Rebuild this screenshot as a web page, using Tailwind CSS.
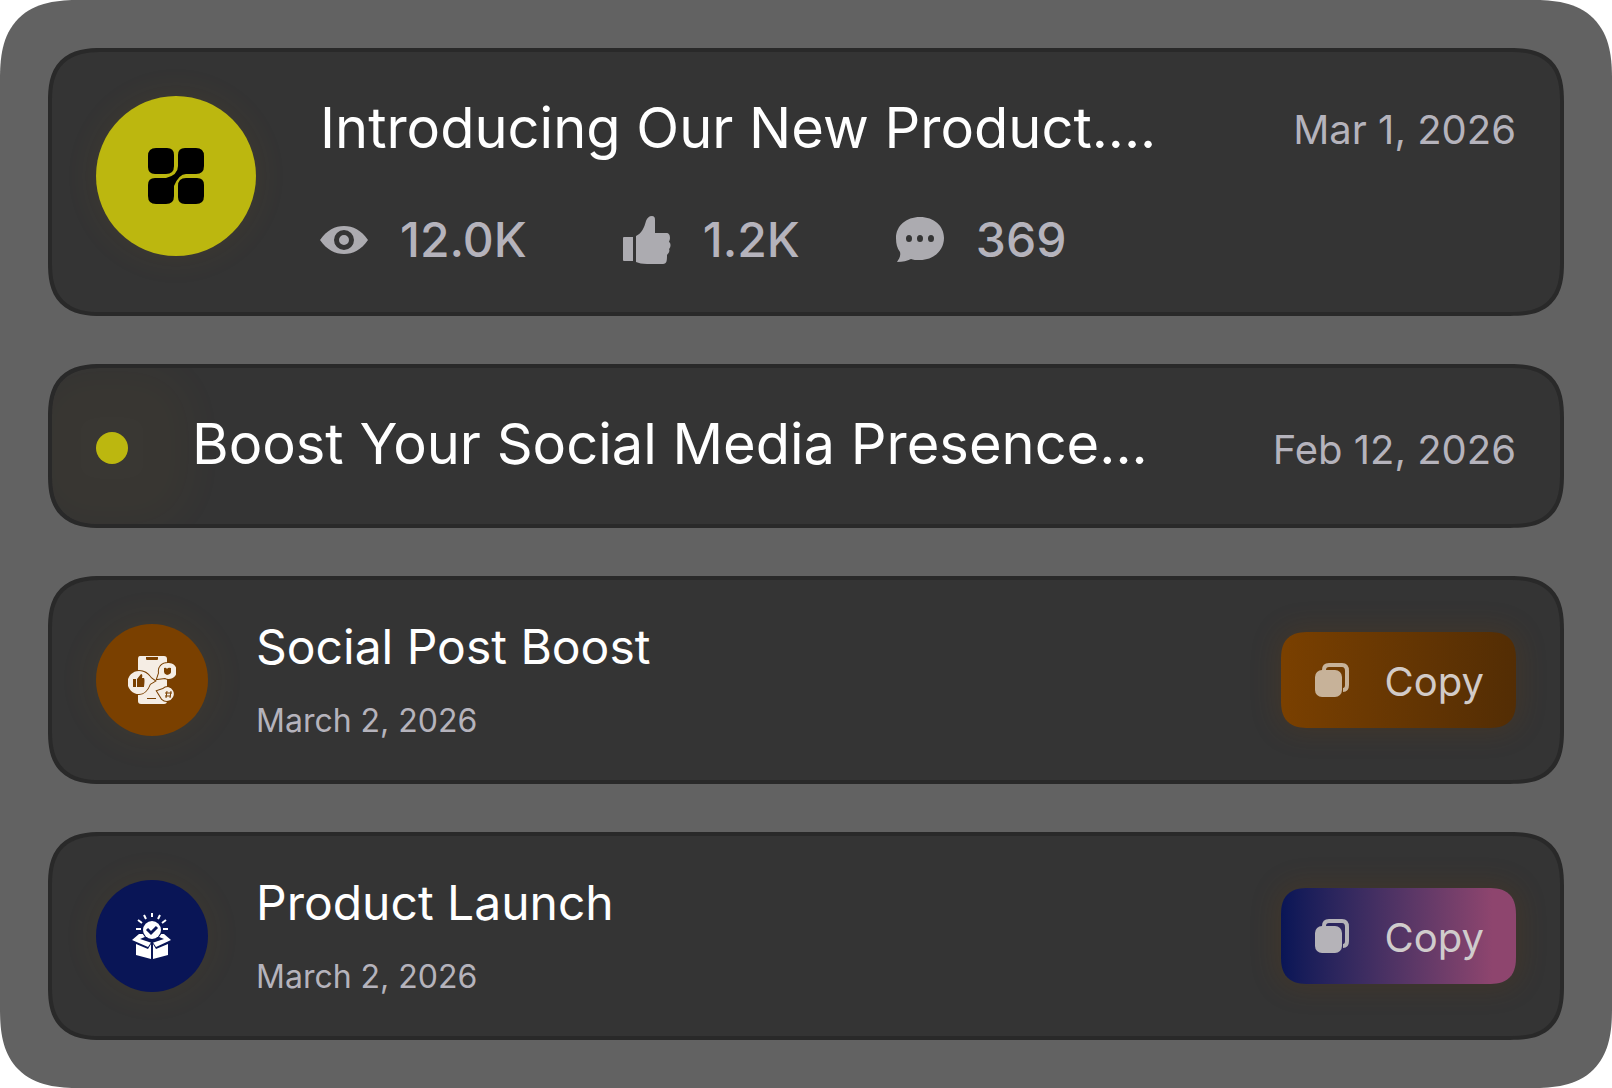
<!DOCTYPE html>
<html lang="en">
<head>
    <meta charset="UTF-8">
    <meta name="viewport" content="width=device-width, initial-scale=1.0">
    <title>Recent Posts</title>
    <script src="https://cdn.jsdelivr.net/npm/@tailwindcss/browser@4"></script>
</head>
<body class="bg-white font-['Inter',sans-serif] text-white">
    <main class="flex min-h-screen flex-col gap-12 rounded-[60px] bg-[#626262] p-12 supports-[corner-shape:squircle]:rounded-[80px] supports-[corner-shape:squircle]:[corner-shape:superellipse(1.4)]">

        <!-- Post with stats -->
        <article class="flex gap-16 overflow-hidden rounded-[40px] border-4 border-[#292929] bg-[#343434] p-11 supports-[corner-shape:squircle]:rounded-[54px] supports-[corner-shape:squircle]:[corner-shape:superellipse(1.4)]">
            <div class="flex size-40 shrink-0 items-center justify-center rounded-full bg-[#bcb70f] shadow-[0_0_32px_4px_#bc860f10]">
                <svg class="size-14" viewBox="0 0 56 56" fill="#000" aria-hidden="true">
                    <path d="M8 0h11q7 0 7 7v11q0 8-8 8H7q-7 0-7-7V8q0-8 8-8Z"/>
                    <path d="M37 0h11q8 0 8 8v10q0 8-8 8H38q-7 0-12 12v10q0 8-8 8H8q-8 0-8-8V37q0-7 7-7h11q12-3 12-12V7q0-7 7-7Z"/>
                    <path d="M38 30h11q7 0 7 7v11q0 8-8 8H37q-7 0-7-7V38q0-8 8-8Z"/>
                </svg>
            </div>
            <div class="flex flex-1 flex-col gap-12">
                <div class="flex items-start justify-between gap-8">
                    <h2 class="text-[56px] leading-[64px] whitespace-nowrap">Introducing Our New Product....</h2>
                    <time datetime="2026-03-01" class="shrink-0 text-[40px] leading-[68px] text-[#b5b3bc]">Mar 1, 2026</time>
                </div>
                <div class="flex gap-24 text-[48px] leading-[56px] font-medium text-[#b5b3bc]">
                    <span class="flex items-center gap-8">
                        <svg class="size-12" viewBox="0 0 48 48" fill="#acabb0" aria-hidden="true">
                            <path fill-rule="evenodd" d="M0 24C7 14 15 10 24 10s17 4 24 14C41 34 33 38 24 38S7 34 0 24Zm24-10a10 10 0 1 0 0 20 10 10 0 0 0 0-20Zm0 5a5 5 0 1 1 0 10 5 5 0 0 1 0-10Z"/>
                        </svg>
                        12.0K
                    </span>
                    <span class="flex items-center gap-8">
                        <svg class="size-12" viewBox="0 0 48 48" fill="#acabb0" aria-hidden="true">
                            <path d="M1 21h9v24H1q-1 0-1-1V22q0-1 1-1Z"/>
                            <path d="M13 20c6-3 8-8 10-15 1-3 3-5 6-5 2 0 3 1 3 4v13h11c3 0 4 2 4 5 0 2-1 3-1 4 2 1 2 5 0 7 1 2 0 4-2 6 0 5 0 9-4 9H24c-5 0-8-1-11-2Z"/>
                        </svg>
                        1.2K
                    </span>
                    <span class="flex items-center gap-8">
                        <svg class="size-12" viewBox="0 0 48 48" fill="#acabb0" aria-hidden="true">
                            <path fill-rule="evenodd" d="M24 1c14 0 24 9 24 21S38 44 24 44c-4 0-7 0-9-1-4 2-8 3-14 3 2-3 4-6 3-10C1 32 0 28 0 22 0 10 10 1 24 1ZM13 19a3 3.500 0 1 0 0 7 3 3.500 0 0 0 0-7Zm11 0a3 3.500 0 1 0 0 7 3 3.500 0 0 0 0-7Zm11 0a3 3.500 0 1 0 0 7 3 3.500 0 0 0 0-7Z"/>
                        </svg>
                        369
                    </span>
                </div>
            </div>
        </article>

        <!-- Compact post -->
        <article class="flex h-[164px] gap-16 overflow-hidden rounded-[40px] border-4 border-[#292929] bg-[#343434] p-11 supports-[corner-shape:squircle]:rounded-[54px] supports-[corner-shape:squircle]:[corner-shape:superellipse(1.4)]">
            <div class="flex h-16 shrink-0 items-center self-end">
                <span class="size-8 rounded-full bg-[#bcb70f] shadow-[0_0_40px_64px_#bc860f09]"></span>
            </div>
            <h2 class="flex-1 text-[56px] leading-[64px] whitespace-nowrap">Boost Your Social Media Presence...</h2>
            <time datetime="2026-02-12" class="shrink-0 self-end text-[40px] leading-[60px] text-[#b5b3bc]">Feb 12, 2026</time>
        </article>

        <!-- Templates -->
        <article class="flex items-center gap-12 overflow-hidden rounded-[40px] border-4 border-[#292929] bg-[#343434] p-11 supports-[corner-shape:squircle]:rounded-[54px] supports-[corner-shape:squircle]:[corner-shape:superellipse(1.4)]">
            <div class="flex size-28 shrink-0 items-center justify-center rounded-full bg-[#7a4000] shadow-[0_0_32px_12px_#bc860f0c]">
                <svg class="size-12" viewBox="0 0 48 48" fill="#f5ede4" aria-hidden="true">
                    <path d="M12 0h24q3 0 3 3v42q0 3-3 3H13q-3 0-3-3V3q0-3 2-3Z"/>
                    <path d="M18 1h12v2q0 1-1 1H19q-1 0-1-1Z" fill="#7a4000"/>
                    <path d="M19 42h9v1h-9Z" fill="#7a4000"/>
                    <g stroke="#7a4000" stroke-width="2" paint-order="stroke">
                        <path d="M11 15c6 0 10 4 12 7l4 3-5 3c-2 5-5 10-11 10A11 11 0 0 1 11 15Z"/>
                        <path d="M40 7a8 8 0 1 1-3 15l-8 1 2-6c-1-6 3-10 9-10Z"/>
                        <path d="M40 31a7 7 0 1 1-6 12l-5-8 6-2q2-2 5-2Z"/>
                    </g>
                    <path d="M5 23h3v8H5Zm4 0 4-5q2 0 1 4h2q1 1 0 9H9Z" fill="#7a4000"/>
                    <path d="M36 12q2-1 3 1 1-2 4-1v4q0 2-4 3-3-1-3-3Z" fill="#7a4000"/>
                    <path d="m39 35-1 7m5-7-1 7m-5-5h7m-7 3h6" stroke="#7a4000" fill="none"/>
                </svg>
            </div>
            <div class="flex flex-1 flex-col gap-9">
                <h2 class="text-[48px] leading-[46px] whitespace-nowrap">Social Post Boost</h2>
                <time datetime="2026-03-02" class="text-[32px] leading-[30px] text-[#b5b3bc]">March 2, 2026</time>
            </div>
            <button type="button" class="flex h-24 shrink-0 items-center gap-8 rounded-[20px] bg-linear-to-r from-[#7a4000] to-[#532d04] px-8 text-[40px] text-[#d2cbc8] shadow-[0_0_28px_4px_#7a400030] supports-[corner-shape:squircle]:rounded-[28px] supports-[corner-shape:squircle]:[corner-shape:superellipse(1.4)]">
                <svg class="size-10" viewBox="0 0 40 40" aria-hidden="true">
                    <rect x="2" y="10" width="27" height="27" rx="7" fill="#c7b299"/>
                    <path d="M11 10q0-5 5-5h13q5 0 5 6v14q0 5-4 5" fill="none" stroke="#c7b299" stroke-width="4"/>
                </svg>
                <span class="pt-1">Copy</span>
            </button>
        </article>

        <article class="flex items-center gap-12 overflow-hidden rounded-[40px] border-4 border-[#292929] bg-[#343434] p-11 supports-[corner-shape:squircle]:rounded-[54px] supports-[corner-shape:squircle]:[corner-shape:superellipse(1.4)]">
            <div class="flex size-28 shrink-0 items-center justify-center rounded-full bg-[#091556] shadow-[0_0_32px_8px_#bc860f0c]">
                <svg class="size-12" viewBox="0 0 48 48" fill="#fff" aria-hidden="true">
                    <path d="M24 1v4M16 3l2 4m14-4-2 4M10 8l4 3m24-3-4 3M8 17h5m22 0h5" stroke="#fff" stroke-width="2" fill="none"/>
                    <path d="m11 22-7 6 16 7 4-6 4 6 15-7-7-6Z"/>
                    <path d="m12 27 12-5 12 5-12 4Z" fill="#091556"/>
                    <circle cx="24" cy="18" r="9" stroke="#091556" stroke-width="2" paint-order="stroke"/>
                    <path d="m19 17 4 4 6-6" stroke="#091556" stroke-width="3" fill="none"/>
                    <path d="m8 32 12 5 3-5v15L8 43Zm32 0-12 5-3-5v15l15-4Z"/>
                </svg>
            </div>
            <div class="flex flex-1 flex-col gap-9">
                <h2 class="text-[48px] leading-[46px] whitespace-nowrap">Product Launch</h2>
                <time datetime="2026-03-02" class="text-[32px] leading-[30px] text-[#b5b3bc]">March 2, 2026</time>
            </div>
            <button type="button" class="flex h-24 shrink-0 items-center gap-8 rounded-[20px] bg-linear-to-r from-[#091556] to-[#8e456e] to-90% px-8 text-[40px] text-[#d0cccc] shadow-[0_0_28px_4px_#7a400030] supports-[corner-shape:squircle]:rounded-[28px] supports-[corner-shape:squircle]:[corner-shape:superellipse(1.4)]">
                <svg class="size-10" viewBox="0 0 40 40" aria-hidden="true">
                    <rect x="2" y="10" width="27" height="27" rx="7" fill="#b5b3b8"/>
                    <path d="M11 10q0-5 5-5h13q5 0 5 6v14q0 5-4 5" fill="none" stroke="#b5b3b8" stroke-width="4"/>
                </svg>
                <span class="pt-1">Copy</span>
            </button>
        </article>
    </main>
</body>
</html>
